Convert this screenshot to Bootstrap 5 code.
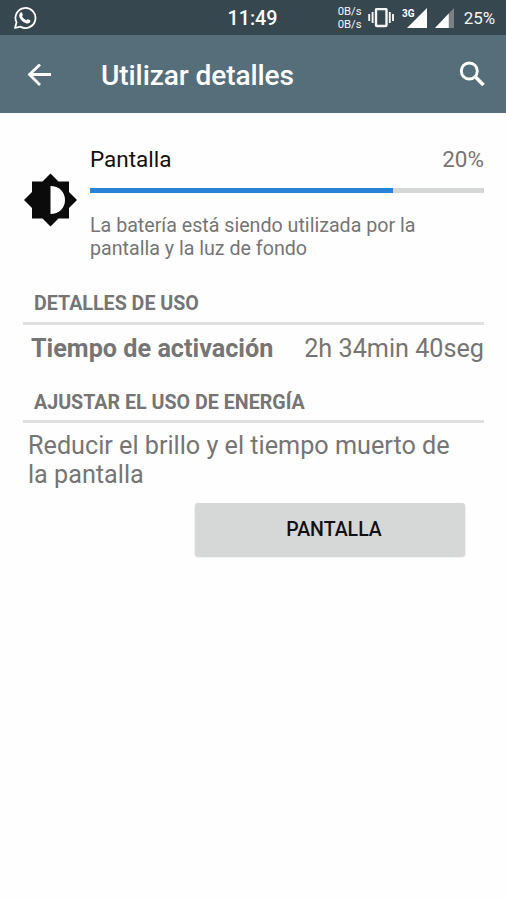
<!DOCTYPE html>
<html lang="es">
<head>
<meta charset="utf-8">
<meta name="viewport" content="width=device-width, initial-scale=1">
<title>Utilizar detalles</title>
<link href="https://cdn.jsdelivr.net/npm/bootstrap@5.3.0/dist/css/bootstrap.min.css" rel="stylesheet">
<style>
body{font-family:Roboto,"Noto Sans",sans-serif;background:#fefefe;color:#757575;min-height:899px;overflow:hidden}
svg{display:block;flex:none}
.statusbar{display:grid!important;grid-template-columns:1fr auto 1fr;height:35px;background:#37474f;color:#f5f6f6;padding:0 11px 0 13px}
.clock{font-size:19.7px;font-weight:500;line-height:35px;padding-top:1px;margin-right:3px;color:#fff}
.rates{font-size:11.3px;line-height:12.6px;width:25px;padding-top:1px;margin-right:5px;white-space:nowrap}
.level{font-size:16.9px;line-height:35px;padding-top:1px;margin-left:10px}
.appbar{height:78px;background:#566e7a;color:#fff;padding:0 20px 0 26px}
.screen-title{font-size:28.1px;font-weight:500;line-height:36px;margin:4px 0 0 48px;letter-spacing:-.1px}
.details{padding:31px 22px 0 23px}
.usage-icon{margin:29px 13px 0 0}
.usage-name{font-size:22.5px;line-height:30px;color:#111}
.usage-pct{font-size:22.5px;line-height:30px}
.usage-bar{height:5px;margin-top:14px;background:#d5d6d6;border-radius:0}
.usage-bar .progress-bar{background:#2a82d6}
.summary{font-size:19.65px;line-height:23px;margin:21px 0 0}
.category{font-size:19.65px;font-weight:700;line-height:24px;padding-left:11px;border-bottom:3px solid #e0e0e0;margin:0}
.category-usage{margin-top:32px;height:33px}
.category-power{margin-top:27px;height:32px}
.entry{font-size:25.2px;line-height:30px;padding:9px 0 0 8px}
.advice{font-size:25.2px;line-height:29px;padding:8px 0 0 5px}
.btn-screen{width:270px;height:53px;margin:14px 19.500px 0 0;padding:1px 0 0 9px;font-size:19.5px;font-weight:500;background:#d6d7d7;border:0;border-radius:3px;color:#111;box-shadow:0 1px 2px #0003}
</style>
</head>
<body>
<header>
  <div class="statusbar align-items-center">
    <svg width="24" height="24" viewBox="0 0 24 24" fill="none"><path d="M2 22l1.500-5.600A10 10 0 1 1 7.400 20.600Z" stroke="#fff" stroke-width="1.800" stroke-linejoin="round"/><path d="M7.500 6.700c.5-.5 1.200-.5 1.500.1l.8 1.900c.1.400 0 .7-.8 1.600 1 1.900 2.500 3.200 4.500 4 .9-1.100 1.100-1.300 1.600-1.100l1.900 1c.6.300.5.900.3 1.500-.6 1.500-2.500 2-4.200 1.500-3.500-1.100-5.600-3.500-6.700-6.200-.6-1.700-.1-3.300 1.100-4.300Z" fill="#fff"/></svg>
    <div class="clock">11:49</div>
    <div class="d-flex align-items-center justify-content-end">
      <div class="rates">0B/s<br>0B/s</div>
      <svg width="26" height="20" viewBox="0 0 26 20" fill="none" stroke="#f5f6f6"><rect x="8" y="1" width="10.500" height="17" rx="1" stroke-width="2.400"/><path d="M1.200 6v7M4.600 4v11M21.800 4v11M25 6v7" stroke-width="1.900"/></svg>
      <svg class="ms-2" width="25" height="25" viewBox="0 -2 25 25" fill="#fff"><path d="M25 0v20H5Z"/><text x="0" y="9" font-family="Roboto" font-size="11.500" font-weight="700" textLength="12.500" lengthAdjust="spacingAndGlyphs">3G</text></svg>
      <svg class="ms-2" width="19" height="20" viewBox="0 0 20 20" preserveAspectRatio="none"><path d="M20 0v20H0Z" fill="#7b8083"/><path d="M14.500 5.500V20H0Z" fill="#fff"/></svg>
      <div class="level">25%</div>
    </div>
  </div>
  <nav class="appbar d-flex align-items-center">
    <svg class="mt-1" width="27" height="24" viewBox="0 0 27 24" fill="none" stroke="#fff" stroke-width="2.800"><path d="M25 10.500H4M14 0.500 3.500 10.500 14 21"/></svg>
    <h1 class="screen-title">Utilizar detalles</h1>
    <svg class="ms-auto" width="28" height="28" viewBox="0 0 28 28" fill="none" stroke="#fff"><circle cx="11.300" cy="11" r="8" stroke-width="2.900"/><path d="m17 16.500 8.500 8.500" stroke-width="3.600"/></svg>
  </nav>
</header>
<main class="details">
  <section class="d-flex">
    <svg class="usage-icon" width="54" height="54" viewBox="0 0.500 54 54"><path d="M27.500 1 35.500 9H46V19.500L54 27.500 46 35.500V46H35.500L27.500 54 19.500 46H9V35.500L1 27.500 9 19.500V9H19.500Z" fill="#0b0b0b"/><path d="M27.500 13.500c8.500 0 14.500 6 14.500 14s-6 14-14.500 14Z" fill="#fefefe"/></svg>
    <div class="flex-grow-1">
      <div class="d-flex justify-content-between"><span class="usage-name">Pantalla</span><span class="usage-pct">20%</span></div>
      <div class="progress usage-bar" role="progressbar" aria-valuenow="77" aria-valuemin="0" aria-valuemax="100"><div class="progress-bar" style="width:77%"></div></div>
      <p class="summary">La batería está siendo utilizada por la<br>pantalla y la luz de fondo</p>
    </div>
  </section>
  <section>
    <h2 class="category category-usage">DETALLES DE USO</h2>
    <div class="entry d-flex justify-content-between"><strong>Tiempo de activación</strong><span>2h 34min 40seg</span></div>
  </section>
  <section>
    <h2 class="category category-power">AJUSTAR EL USO DE ENERGÍA</h2>
    <div class="advice">Reducir el brillo y el tiempo muerto de<br>la pantalla</div>
    <div class="d-flex justify-content-end"><button class="btn btn-screen" type="button">PANTALLA</button></div>
  </section>
</main>
<script src="https://cdn.jsdelivr.net/npm/bootstrap@5.3.0/dist/js/bootstrap.bundle.min.js"></script>
</body>
</html>
